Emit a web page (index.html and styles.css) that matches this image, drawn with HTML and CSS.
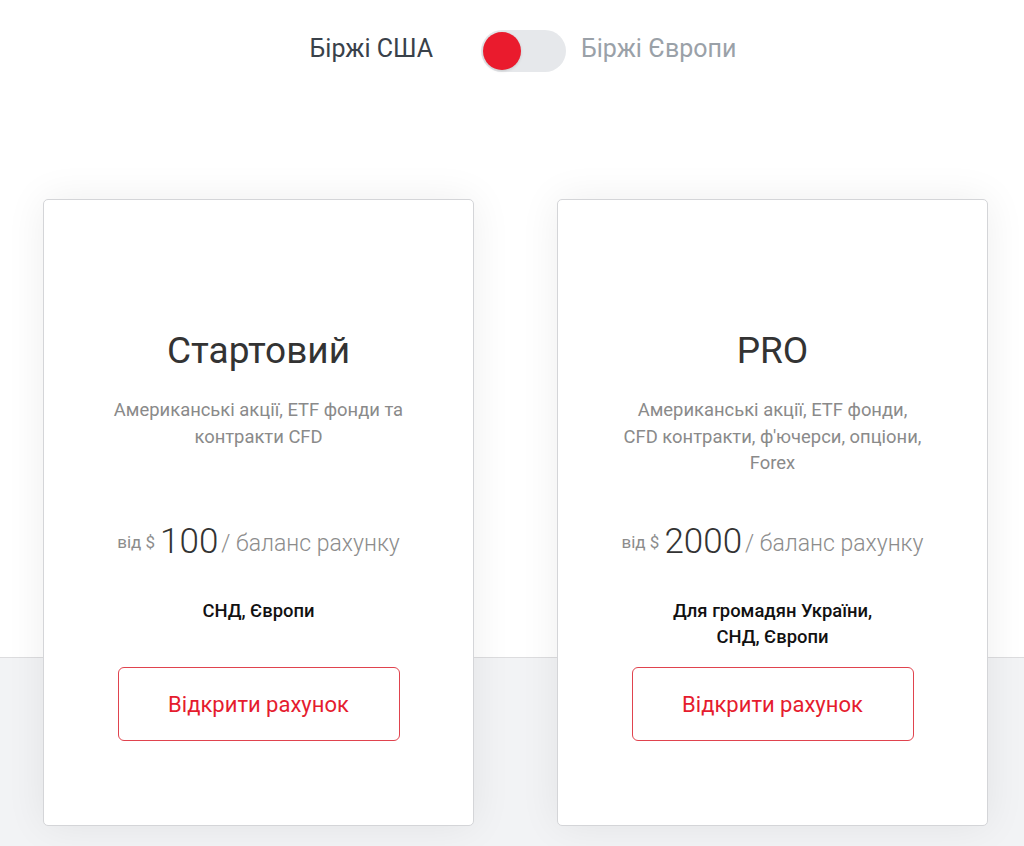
FILE: index.html
```html
<!DOCTYPE html>
<html lang="uk">
<head>
  <meta charset="UTF-8" />
  <title>Тарифи</title>
  <link rel="stylesheet" href="styles.css">
</head>
<body>
  <div class="pagina">
    <div class="seletor">
      <span class="rotulo ativo">Біржі США</span>
      <div class="chave"><div class="bolinha"></div></div>
      <span class="rotulo">Біржі Європи</span>
    </div>

    <div class="planos">
      <div class="plano">
        <h2 class="titulo">Стартовий</h2>
        <p class="descricao">Американські акції, ETF фонди та<br>контракти CFD</p>
        <div class="preco">
          <span class="de">від $</span><span class="valor">100</span><span class="sufixo">/ баланс рахунку</span>
        </div>
        <p class="regiao">СНД, Європи</p>
        <button class="abrir">Відкрити рахунок</button>
      </div>

      <div class="plano">
        <h2 class="titulo">PRO</h2>
        <p class="descricao">Американські акції, ETF фонди,<br>CFD контракти, ф'ючерси, опціони,<br>Forex</p>
        <div class="preco">
          <span class="de">від $</span><span class="valor">2000</span><span class="sufixo">/ баланс рахунку</span>
        </div>
        <p class="regiao">Для громадян України,<br>СНД, Європи</p>
        <button class="abrir">Відкрити рахунок</button>
      </div>
    </div>
  </div>
</body>
</html>
```

FILE: styles.css
```css
body {
  margin: 0;
  font-family: Roboto, 'Liberation Sans', Arial, sans-serif;
}
.pagina {
  min-height: 846px;
  background: linear-gradient(#fff 0, #fff 657px, #dcdcde 657px, #dcdcde 658px, #f2f3f5 658px);
  overflow: hidden;
}
.seletor {
  display: flex;
  align-items: center;
  justify-content: center;
  padding-top: 28px;
  height: 44px;
  margin-left: 22px;
}
.rotulo {
  font-size: 25px;
  color: #9aa1a8;
  position: relative;
  top: -2px;
}
.rotulo.ativo {
  color: #39414a;
}
.chave {
  width: 85px;
  height: 42px;
  border-radius: 21px;
  background: #e6e8eb;
  margin: 2px 15px 0 48px;
  padding: 2px;
  box-sizing: border-box;
}
.bolinha {
  width: 38px;
  height: 38px;
  border-radius: 50%;
  background: #ea1b2d;
  box-shadow: 0 1px 3px rgba(0,0,0,0.15);
}
.planos {
  display: flex;
  gap: 83px;
  margin: 127px 0 0 43px;
}
.plano {
  width: 431px;
  height: 627px;
  box-sizing: border-box;
  background: #fff;
  border: 1px solid #d4d5d8;
  border-radius: 5px;
  box-shadow: 0 0 40px rgba(0,0,0,0.07);
  text-align: center;
  padding-top: 131px;
}
.titulo {
  margin: 0;
  font-size: 37px;
  line-height: 40px;
  font-weight: 400;
  color: #333;
}
.descricao {
  margin: 26px 0 0;
  height: 79px;
  font-size: 18.4px;
  line-height: 26.5px;
  color: #8a8a8a;
}
.preco {
  margin-top: 41px;
  height: 48px;
  display: flex;
  align-items: center;
  justify-content: center;
  color: #8c8c8c;
  font-weight: 300;
}
.de {
  font-size: 17px;
  font-weight: 400;
  margin-right: 5px;
  position: relative;
  top: 1px;
}
.valor {
  font-size: 35px;
  color: #333;
  margin-right: 3px;
}
.sufixo {
  font-size: 23px;
  position: relative;
  top: 2px;
}
.regiao {
  margin: 33px 0 0;
  height: 52px;
  font-size: 18.4px;
  line-height: 26px;
  font-weight: 500;
  color: #111;
}
.abrir {
  margin-top: 17px;
  width: 282px;
  height: 74px;
  background: #fff;
  border: 1.5px solid #e0434e;
  border-radius: 6px;
  font-family: inherit;
  font-size: 22px;
  color: #e51c2e;
  cursor: pointer;
}
```
